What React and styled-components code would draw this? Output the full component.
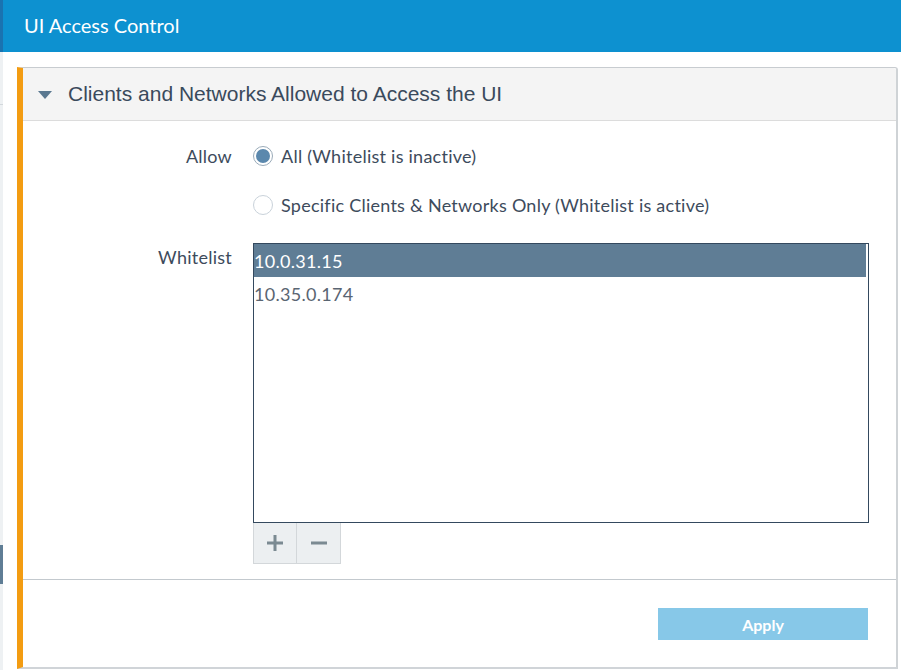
import React, { useState } from "react";
import styled, { createGlobalStyle } from "styled-components";

const Global = createGlobalStyle`
  html, body { margin: 0; padding: 0; background: #fff; overflow: hidden; }
  body { font-family: Lato, "Open Sans", sans-serif; }
  * { box-sizing: border-box; }
`;

const Page = styled.div`
  display: flex;
  width: 901px;
  height: 670px;
  overflow: hidden;
`;

const BgStrip = styled.div`
  width: 3px;
  flex: none;
  display: flex;
  flex-direction: column;
  background: #eef1f3;
`;

const BgTop = styled.div`
  height: 52px;
  background: #1a73b0;
`;

const BgNav = styled.div`
  height: 53px;
  border-bottom: 1px solid #d3d8dc;
`;

const BgMark = styled.div`
  margin-top: 440px;
  height: 39px;
  background: #5f7d95;
`;

const Dialog = styled.div`
  flex: 1;
  display: flex;
  flex-direction: column;
  background: #fff;
`;

const TitleBar = styled.div`
  height: 52px;
  flex: none;
  background: #0d91d0;
  color: #fff;
  display: flex;
  align-items: center;
  padding-left: 21px;
  font-family: Lato, sans-serif;
  font-size: 20px;
  padding-bottom: 2px;
`;

const Body = styled.div`
  flex: 1;
  padding: 15px 3px 1px 14px;
  display: flex;
`;

const Panel = styled.section`
  flex: 1;
  display: flex;
  flex-direction: column;
  border: 1px solid #c8ccd0;
  border-left: 6px solid #f39c12;
  border-bottom: 2px solid #d0d4d8;
  border-right: 2px solid #cfd3d6;
  border-top-right-radius: 3px;
`;

const PanelHeader = styled.div`
  height: 53px;
  flex: none;
  background: #f4f4f4;
  border-bottom: 1px solid #dcdcdc;
  display: flex;
  align-items: center;
  padding-left: 15px;
  gap: 16px;
  color: #3a4a5c;
  font-family: "Liberation Sans", Arial, sans-serif;
  font-size: 21px;
  border-top-right-radius: 3px;
`;

const Caret = styled.svg`
  width: 14px;
  height: 8px;
  flex: none;
  margin-top: 1px;
`;

const Form = styled.div`
  display: grid;
  grid-template-columns: 209px 1fr;
  column-gap: 21px;
  padding-top: 23px;
`;

const Label = styled.div`
  text-align: right;
  color: #3d4b5c;
  font-size: 18px;
  letter-spacing: 0.25px;
  line-height: 24px;
  margin-top: ${(p) => p.$mt || 0}px;
`;

const Options = styled.div`
  display: flex;
  flex-direction: column;
  gap: 25px;
`;

const Option = styled.label`
  display: flex;
  align-items: center;
  gap: 8px;
  height: 24px;
  color: #3d4b5c;
  font-size: 18px;
  letter-spacing: 0.25px;
  cursor: pointer;
`;

const Radio = styled.span`
  width: 20px;
  height: 20px;
  border-radius: 50%;
  border: 1px solid ${(p) => (p.$on ? "#9aabb9" : "#c9d2da")};
  background: #fff;
  display: flex;
  align-items: center;
  justify-content: center;
  flex: none;
  &::after {
    content: "";
    width: 14px;
    height: 14px;
    border-radius: 50%;
    background: ${(p) => (p.$on ? "#5b88ad" : "transparent")};
  }
`;

const ListCol = styled.div`
  margin-top: 26px;
  display: flex;
  flex-direction: column;
`;

const ListBox = styled.div`
  width: 616px;
  height: 280px;
  border: 1px solid #34495e;
  background: #fff;
`;

const Item = styled.div`
  height: 33px;
  display: flex;
  align-items: center;
  font-size: 18px;
  letter-spacing: 0.3px;
  color: ${(p) => (p.$sel ? "#fff" : "#5a6572")};
  background: ${(p) => (p.$sel ? "#5f7d95" : "transparent")};
  margin-right: ${(p) => (p.$sel ? 2 : 0)}px;
`;

const BtnGroup = styled.div`
  display: flex;
`;

const IconBtn = styled.button`
  width: 44px;
  height: 41px;
  background: #eceff1;
  border: 1px solid #d3d7da;
  border-top: none;
  border-left-width: ${(p) => (p.$first ? 1 : 0)}px;
  display: flex;
  align-items: center;
  justify-content: center;
  padding: 0;
  cursor: pointer;
`;

const Footer = styled.div`
  margin-top: 15px;
  border-top: 1px solid #c3c9ce;
  flex: 1;
  display: flex;
  justify-content: flex-end;
  align-items: flex-start;
  padding: 28px 28px 0 0;
`;

const ApplyBtn = styled.button`
  width: 210px;
  height: 32px;
  background: #87c8e8;
  border: none;
  color: #fff;
  font-family: Lato, sans-serif;
  font-weight: 700;
  font-size: 16px;
  cursor: pointer;
`;

export default function App() {
  const [mode, setMode] = useState("all");
  const [sel, setSel] = useState(0);
  const ips = ["10.0.31.15", "10.35.0.174"];
  return (
    <>
      <Global />
      <Page>
        <BgStrip>
          <BgTop />
          <BgNav />
          <BgMark />
        </BgStrip>
        <Dialog>
          <TitleBar>UI Access Control</TitleBar>
          <Body>
            <Panel>
              <PanelHeader>
                <Caret viewBox="0 0 14 8">
                  <path d="M0 0 L14 0 L7 8 Z" fill="#5a7890" />
                </Caret>
                Clients and Networks Allowed to Access the UI
              </PanelHeader>
              <Form>
                <Label>Allow</Label>
                <Options>
                  <Option onClick={() => setMode("all")}>
                    <Radio $on={mode === "all"} />
                    All (Whitelist is inactive)
                  </Option>
                  <Option onClick={() => setMode("specific")}>
                    <Radio $on={mode === "specific"} />
                    Specific Clients &amp; Networks Only (Whitelist is active)
                  </Option>
                </Options>
                <Label $mt={28}>Whitelist</Label>
                <ListCol>
                  <ListBox>
                    {ips.map((ip, i) => (
                      <Item key={ip} $sel={i === sel} onClick={() => setSel(i)}>
                        {ip}
                      </Item>
                    ))}
                  </ListBox>
                  <BtnGroup>
                    <IconBtn $first aria-label="Add">
                      <svg width="18" height="18" viewBox="0 0 18 18">
                        <rect x="7.5" y="1" width="3" height="16" fill="#7b8a92" />
                        <rect x="1" y="7.5" width="16" height="3" fill="#7b8a92" />
                      </svg>
                    </IconBtn>
                    <IconBtn aria-label="Remove">
                      <svg width="18" height="18" viewBox="0 0 18 18">
                        <rect x="1" y="7.5" width="16" height="3" fill="#7b8a92" />
                      </svg>
                    </IconBtn>
                  </BtnGroup>
                </ListCol>
              </Form>
              <Footer>
                <ApplyBtn>Apply</ApplyBtn>
              </Footer>
            </Panel>
          </Body>
        </Dialog>
      </Page>
    </>
  );
}
